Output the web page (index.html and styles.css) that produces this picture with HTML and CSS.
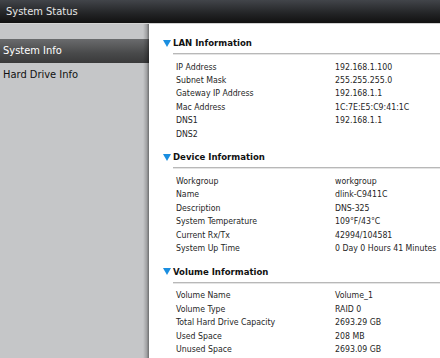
FILE: index.html
```html
<!DOCTYPE html>
<html lang="en">
<head>
    <meta charset="UTF-8">
    <meta name="viewport" content="width=device-width, initial-scale=1.0">
    <title>System Status</title>
    <link rel="stylesheet" href="styles.css">
</head>
<body>
    <div class="topbar">System Status</div>
    <div class="main">
        <div class="sidebar">
            <div class="nav-item active">System Info</div>
            <div class="nav-item">Hard Drive Info</div>
        </div>
        <div class="content">
            <div class="section">
                <h2 class="section-title"><span class="arrow"></span>LAN Information</h2>
                <div class="rows">
                    <div class="label">IP Address</div><div class="value">192.168.1.100</div>
                    <div class="label">Subnet Mask</div><div class="value">255.255.255.0</div>
                    <div class="label">Gateway IP Address</div><div class="value">192.168.1.1</div>
                    <div class="label">Mac Address</div><div class="value">1C:7E:E5:C9:41:1C</div>
                    <div class="label">DNS1</div><div class="value">192.168.1.1</div>
                    <div class="label">DNS2</div><div class="value"></div>
                </div>
            </div>
            <div class="section">
                <h2 class="section-title"><span class="arrow"></span>Device Information</h2>
                <div class="rows">
                    <div class="label">Workgroup</div><div class="value">workgroup</div>
                    <div class="label">Name</div><div class="value">dlink-C9411C</div>
                    <div class="label">Description</div><div class="value">DNS-325</div>
                    <div class="label">System Temperature</div><div class="value">109°F/43°C</div>
                    <div class="label">Current Rx/Tx</div><div class="value">42994/104581</div>
                    <div class="label">System Up Time</div><div class="value">0 Day 0 Hours 41 Minutes</div>
                </div>
            </div>
            <div class="section">
                <h2 class="section-title"><span class="arrow"></span>Volume Information</h2>
                <div class="rows">
                    <div class="label">Volume Name</div><div class="value">Volume_1</div>
                    <div class="label">Volume Type</div><div class="value">RAID 0</div>
                    <div class="label">Total Hard Drive Capacity</div><div class="value">2693.29 GB</div>
                    <div class="label">Used Space</div><div class="value">208 MB</div>
                    <div class="label">Unused Space</div><div class="value">2693.09 GB</div>
                </div>
            </div>
        </div>
    </div>
</body>
</html>
```

FILE: styles.css
```css
body {
    margin: 0;
    height: 358px;
    overflow: hidden;
    font-family: "DejaVu Sans Condensed", "DejaVu Sans", sans-serif;
    font-stretch: condensed;
    background: #fff;
    color: #222;
}
.topbar {
    height: 23px;
    line-height: 23px;
    padding-left: 6px;
    font-size: 11px;
    color: #e6e6e6;
    background: linear-gradient(to bottom, #42454a, #222325 60%, #111 100%);
    border-bottom: 1px solid #d2d2d2;
}
.main {
    display: flex;
    height: 334px;
}
.sidebar {
    position: relative;
    width: 149px;
    flex-shrink: 0;
    padding-top: 15px;
    box-sizing: border-box;
    background: #c5c6c8;
}
/* soft shadow along the right edge, drawn over the selected item too */
.sidebar::after {
    content: "";
    position: absolute;
    top: 0;
    right: 0;
    bottom: 0;
    width: 6px;
    background: linear-gradient(to right, rgba(0, 0, 0, 0), rgba(0, 0, 0, 0.18) 60%, rgba(0, 0, 0, 0.45));
}
.nav-item {
    height: 24px;
    line-height: 24px;
    padding-left: 3px;
    font-size: 11px;
    color: #111;
}
.nav-item.active {
    color: #fff;
    background: linear-gradient(to bottom, #6a6b6d, #48494a 60%, #3a3a3b);
}
.content {
    flex: 1;
    padding-left: 14px;
}
.section {
    margin-top: 10px;
}
.section:first-child {
    margin-top: 12px;
}
.section-title {
    display: flex;
    align-items: center;
    margin: 0 0 0 10px;
    padding-bottom: 3px;
    font-size: 9.5px;
    font-weight: bold;
    line-height: 14px;
    color: #111;
    border-bottom: 1px solid #b8b8b8;
    box-shadow: 0 1px 0 #e4e4e4;
}
.arrow {
    width: 0;
    height: 0;
    margin-left: -10px;
    margin-right: 2px;
    border-left: 4.5px solid transparent;
    border-right: 4.5px solid transparent;
    border-top: 7px solid #1a8ee0;
}
.rows {
    display: grid;
    grid-template-columns: 159px 1fr;
    grid-auto-rows: 13.4px;
    align-items: center;
    margin-top: 6px;
    padding-left: 13px;
    font-size: 8.7px;
    color: #262626;
}
```
